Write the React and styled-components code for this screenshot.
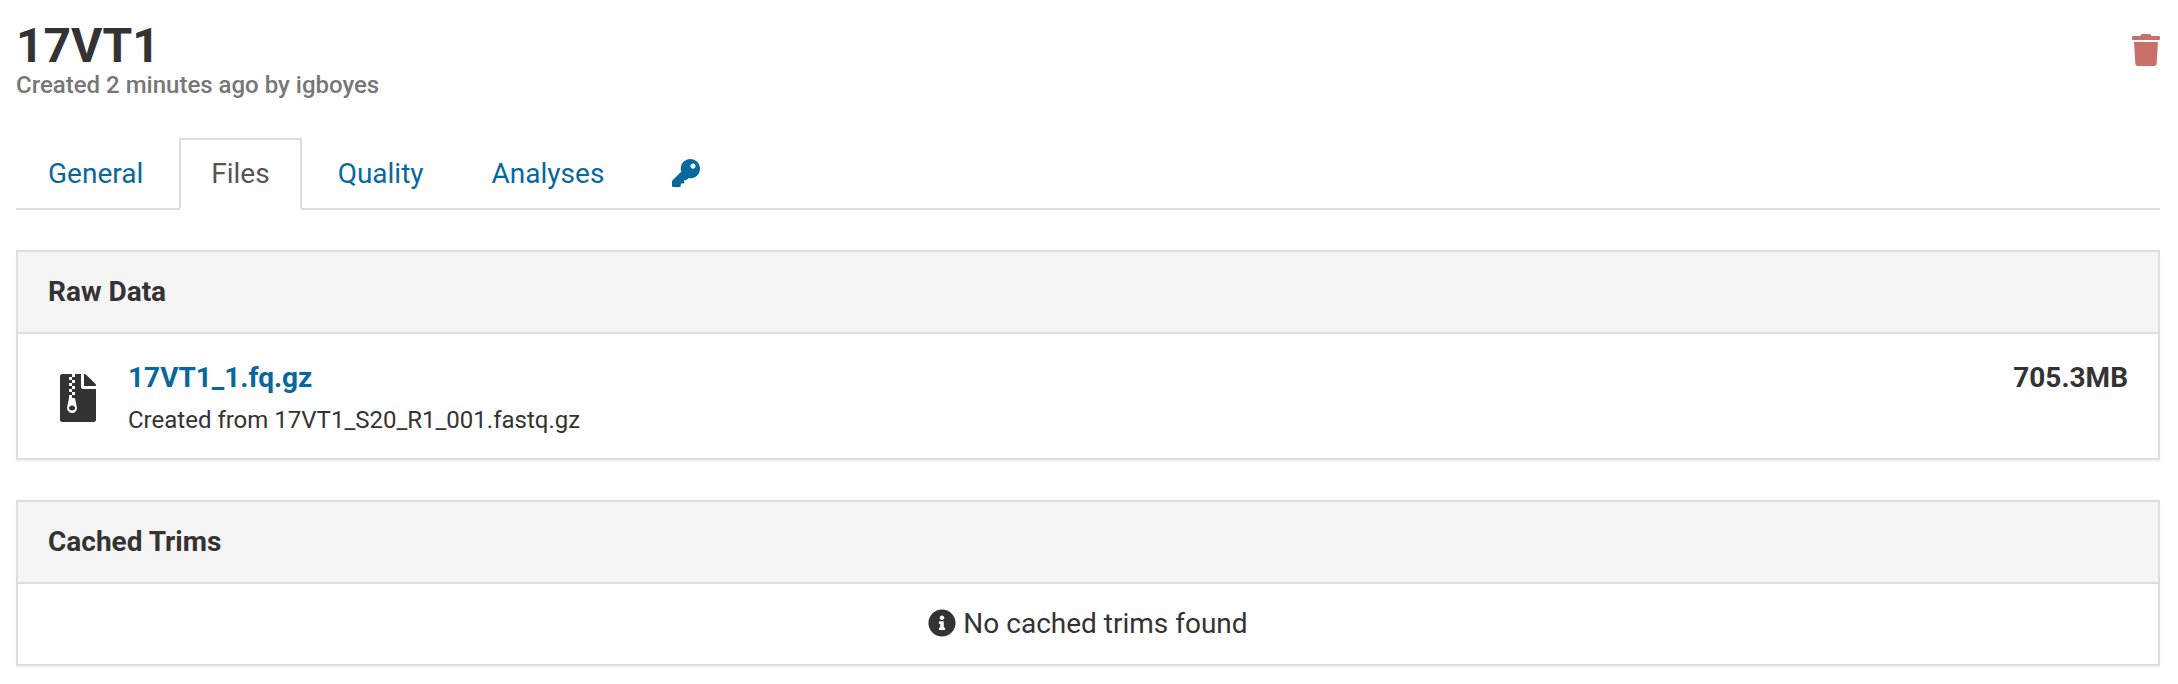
import React from "react";
import styled, { createGlobalStyle } from "styled-components";
import { FaKey, FaTrash, FaInfoCircle, FaFileArchive } from "react-icons/fa";

const GlobalStyle = createGlobalStyle`
  * { box-sizing: border-box; }
  body {
    margin: 0;
    background: #fff;
    color: #333;
    font-family: Roboto, sans-serif;
    font-size: 28px;
    line-height: 40px;
  }
`;

const Page = styled.main`
  padding: 20px 18px 16px 16px;
`;

const Header = styled.header`
  display: flex;
  justify-content: space-between;
  align-items: flex-start;
`;

const Title = styled.h1`
  margin: 0;
  font-size: 48px;
  line-height: 52px;
  font-weight: 700;
`;

const Subtitle = styled.p`
  margin: 0;
  font-size: 24px;
  line-height: 26px;
  font-weight: 500;
  color: #777;
`;

const IconButton = styled.button`
  display: flex;
  margin: 14px 0 0;
  padding: 0;
  border: 0;
  background: none;
  color: #c97069;
  cursor: pointer;

  svg {
    width: 28px;
    height: 32px;
  }
`;

const Tabs = styled.nav`
  display: flex;
  margin: 40px 0;
  border-bottom: 2px solid #ddd;
`;

const Tab = styled.a`
  margin: 0 4px -2px 0;
  padding: 14px 30px;
  border: 2px solid ${(p) => (p.$active ? "#ddd" : "transparent")};
  border-bottom-color: ${(p) => (p.$active ? "#fff" : "transparent")};
  color: ${(p) => (p.$active ? "#555" : "#07689d")};
  text-decoration: none;

  svg {
    vertical-align: -0.125em;
  }
`;

const Panels = styled.div`
  display: grid;
  gap: 40px;
`;

const Panel = styled.section`
  border: 2px solid #ddd;
  box-shadow: 0 2px 2px rgba(0, 0, 0, 0.05);
`;

const PanelTitle = styled.h2`
  margin: 0;
  padding: 20px 30px;
  border-bottom: 2px solid #ddd;
  background: #f5f5f5;
  font-size: 28px;
  line-height: 40px;
  font-weight: 700;
`;

const FileRow = styled.div`
  display: flex;
  align-items: center;
  gap: 20px;
  padding: 24px 30px 20px;
`;

const FileIcon = styled.span`
  display: flex;
  justify-content: center;
  width: 60px;
  font-size: 48px;
`;

const FileInfo = styled.div`
  flex: 1;
`;

const FileLink = styled.a`
  color: #07689d;
  font-weight: 700;
  text-decoration: none;
`;

const FileSource = styled.p`
  margin: 4px 0 0;
  font-size: 24px;
  line-height: 36px;
`;

const FileSize = styled.strong`
  align-self: flex-start;
`;

const Empty = styled.p`
  margin: 0;
  padding: 20px 30px;
  text-align: center;

  svg {
    vertical-align: -0.125em;
  }
`;

export default function App() {
  return (
    <Page>
      <GlobalStyle />
      <Header>
        <div>
          <Title>17VT1</Title>
          <Subtitle>Created 2 minutes ago by igboyes</Subtitle>
        </div>
        <IconButton type="button" aria-label="Delete sample"><FaTrash /></IconButton>
      </Header>
      <Tabs>
        <Tab href="#general">General</Tab>
        <Tab href="#files" $active aria-current="page">Files</Tab>
        <Tab href="#quality">Quality</Tab>
        <Tab href="#analyses">Analyses</Tab>
        <Tab href="#rights" aria-label="Rights"><FaKey /></Tab>
      </Tabs>
      <Panels>
        <Panel>
          <PanelTitle>Raw Data</PanelTitle>
          <FileRow>
            <FileIcon><FaFileArchive /></FileIcon>
            <FileInfo>
              <FileLink href="#download">17VT1_1.fq.gz</FileLink>
              <FileSource>Created from 17VT1_S20_R1_001.fastq.gz</FileSource>
            </FileInfo>
            <FileSize>705.3MB</FileSize>
          </FileRow>
        </Panel>
        <Panel>
          <PanelTitle>Cached Trims</PanelTitle>
          <Empty><FaInfoCircle /> No cached trims found</Empty>
        </Panel>
      </Panels>
    </Page>
  );
}
